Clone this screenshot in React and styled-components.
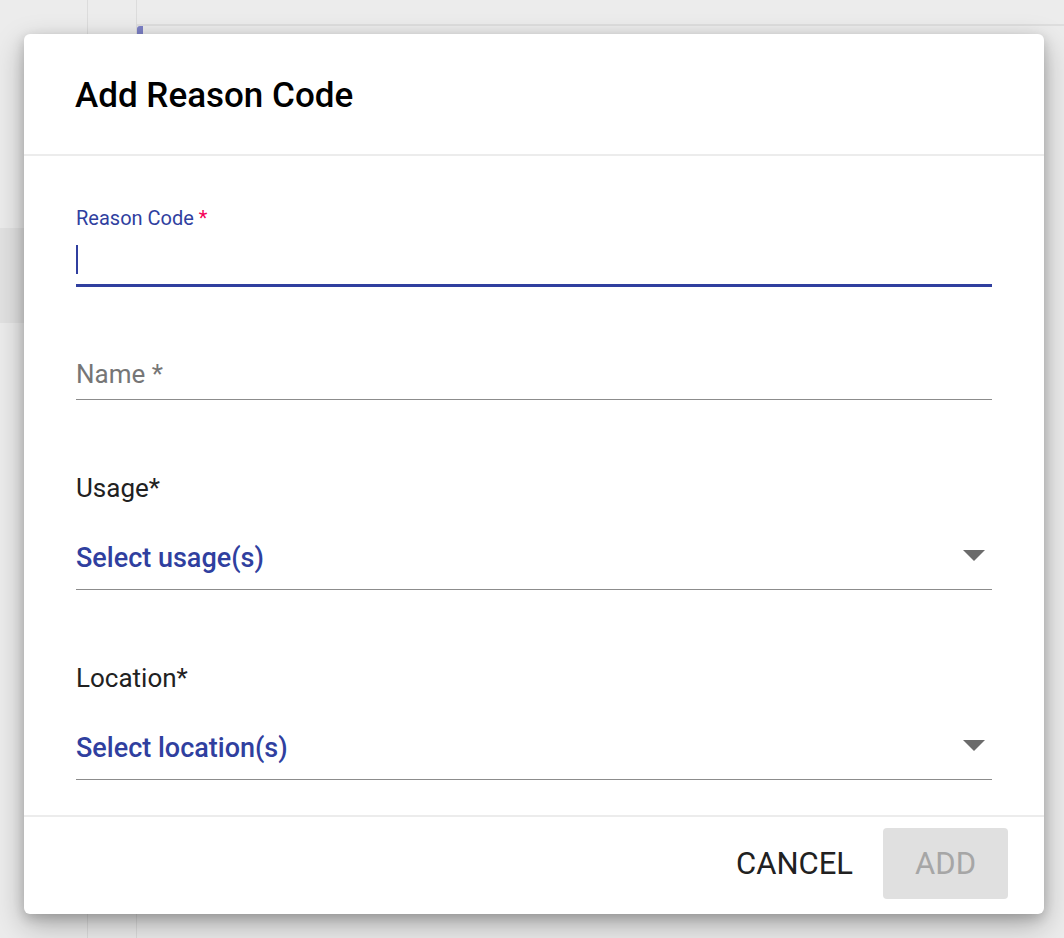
import React from 'react';
import styled, { createGlobalStyle } from 'styled-components';

const Global = createGlobalStyle`
  html, body { margin: 0; padding: 0; }
  body { font-family: Roboto, "Liberation Sans", sans-serif; background: #ebebeb; }
  #root { width: 1064px; height: 938px; overflow: hidden; position: relative; }
`;

const Page = styled.div`
  display: flex;
  width: 1064px;
  height: 938px;
  background: #ececec;
`;

const Sidebar = styled.div`
  width: 88px;
  border-right: 1px solid #dcdcdc;
  display: flex;
  flex-direction: column;
  padding-top: 228px;
  box-sizing: border-box;
`;

const SideRow = styled.div`
  height: 95px;
  background: #e2e2e2;
`;

const Gutter = styled.div`
  width: 48px;
  border-right: 1px solid #dcdcdc;
`;

const Main = styled.div`
  flex: 1;
  padding-top: 24px;
`;

const Panel = styled.div`
  border-top: 2px solid #dedede;
  height: 100%;
  position: relative;
  &:before {
    content: '';
    position: absolute;
    left: 0;
    top: 0;
    width: 6px;
    height: 10px;
    background: #7c80c6;
    border-radius: 3px 0 0 0;
  }
`;

const Dialog = styled.div`
  position: absolute;
  left: 24px;
  top: 34px;
  width: 1020px;
  height: 880px;
  background: #fff;
  border-radius: 6px;
  box-shadow: 0 11px 30px rgba(0,0,0,0.28), 0 4px 12px rgba(0,0,0,0.18);
  display: flex;
  flex-direction: column;
  overflow: hidden;
`;

const Header = styled.div`
  height: 122px;
  padding: 2px 51px 0;
  display: flex;
  align-items: center;
  border-bottom: 2px solid #ececec;
  font-size: 35px;
  font-weight: 500;
  color: #000;
  box-sizing: border-box;
  flex-shrink: 0;
`;

const Body = styled.div`
  flex: 1;
  padding: 49px 52px 0;
  display: flex;
  flex-direction: column;
`;

const Field = styled.div`
  display: flex;
  flex-direction: column;
  margin-bottom: ${p => p.gap || 0}px;
`;

const SmallLabel = styled.div`
  font-size: 20px;
  color: #303f9f;
  height: 26px;
  line-height: 26px;
  span { color: #f50057; }
`;

const Input = styled.div`
  height: 56px;
  border-bottom: ${p => (p.focused ? '3px solid #303f9f' : '1px solid #8c8c8c')};
  display: flex;
  align-items: center;
  font-size: 26px;
  color: #767676;
  box-sizing: border-box;
  padding-top: 4px;
`;

const Cursor = styled.div`
  width: 2px;
  height: 29px;
  background: #303f9f;
`;

const Label = styled.div`
  font-size: 26px;
  color: #212121;
  height: 40px;
  line-height: 40px;
`;

const Select = styled.div`
  height: 82px;
  border-bottom: 1px solid #8c8c8c;
  display: flex;
  align-items: flex-end;
  justify-content: space-between;
  font-size: 27px;
  font-weight: 500;
  color: #303f9f;
  line-height: 30px;
  padding-bottom: 16px;
  box-sizing: border-box;
`;

const Caret = styled.div`
  width: 0;
  height: 0;
  border-left: 11px solid transparent;
  border-right: 11px solid transparent;
  border-top: 11px solid #6b6b6b;
  margin: 0 7px 12px 0;
`;

const Footer = styled.div`
  height: 99px;
  border-top: 2px solid #ececec;
  display: flex;
  align-items: center;
  justify-content: flex-end;
  padding: 0 36px 4px 0;
  gap: 30px;
  box-sizing: border-box;
  flex-shrink: 0;
`;

const Button = styled.button`
  font-family: inherit;
  font-size: 31px;
  border: none;
  border-radius: 4px;
  height: 71px;
  padding: 0 ${p => (p.disabled ? 32 : 0)}px;
  background: ${p => (p.disabled ? '#e0e0e0' : 'transparent')};
  color: ${p => (p.disabled ? '#a6a6a6' : '#212121')};
`;

export default function App() {
  return (
    <>
      <Global />
      <Page>
        <Sidebar><SideRow /></Sidebar>
        <Gutter />
        <Main><Panel /></Main>
      </Page>
      <Dialog>
        <Header>Add Reason Code</Header>
        <Body>
          <Field gap={57}>
            <SmallLabel>Reason Code <span>*</span></SmallLabel>
            <Input focused><Cursor /></Input>
          </Field>
          <Field gap={68}>
            <Input>Name *</Input>
          </Field>
          <Field gap={68}>
            <Label>Usage*</Label>
            <Select>Select usage(s)<Caret /></Select>
          </Field>
          <Field>
            <Label>Location*</Label>
            <Select>Select location(s)<Caret /></Select>
          </Field>
        </Body>
        <Footer>
          <Button>CANCEL</Button>
          <Button disabled>ADD</Button>
        </Footer>
      </Dialog>
    </>
  );
}
